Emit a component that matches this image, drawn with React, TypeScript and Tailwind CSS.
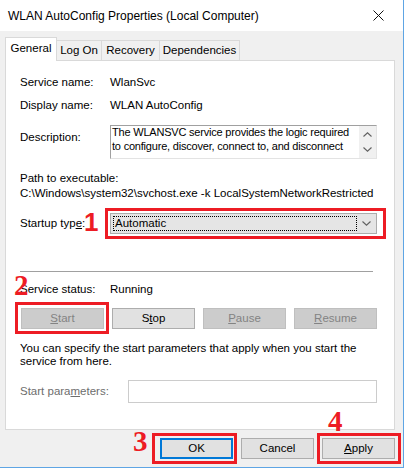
import React from 'react';

const RED = 'border-[#ed1c24]';

function Btn({
  children,
  disabled = false,
  focused = false,
  className = '',
}: {
  children: React.ReactNode;
  disabled?: boolean;
  focused?: boolean;
  className?: string;
}) {
  const look = disabled
    ? 'bg-[#cccccc] border-[#bfbfbf] text-[#838383]'
    : focused
    ? 'bg-[#e1e1e1] border-[#0078d7] border-2 text-black'
    : 'bg-[#e1e1e1] border-[#adadad] text-black';
  return (
    <div className={`h-[21px] flex items-center justify-center border ${look} ${className}`}>
      <span className="leading-none">{children}</span>
    </div>
  );
}

function RedNum({ n, className }: { n: string; className: string }) {
  return (
    <span
      className={`absolute font-['Liberation_Serif',serif] font-bold text-[29px] leading-none text-[#ed1c24] ${className}`}
    >
      {n}
    </span>
  );
}

function Chevron({ up = false }: { up?: boolean }) {
  return (
    <svg width="9" height="5" viewBox="0 0 9 5" className="block">
      <path
        d={up ? 'M0.5 4.5 L4.5 0.8 L8.5 4.5' : 'M0.5 0.5 L4.5 4.2 L8.5 0.5'}
        fill="none"
        stroke="#606060"
        strokeWidth="1.1"
      />
    </svg>
  );
}

function Field({ label, value }: { label: string; value: string }) {
  return (
    <div className="flex h-[16px] items-center">
      <span className="w-[90px]">{label}</span>
      <span>{value}</span>
    </div>
  );
}

export default function App() {
  return (
    <div className="w-[404px] h-[468px] bg-[#f0f0f0] border-r border-b border-[#5ea5e4] flex flex-col font-['Liberation_Sans',Arial,sans-serif] text-[11.5px] text-black overflow-hidden">
      {/* title bar */}
      <div className="h-[31px] shrink-0 bg-white flex items-center justify-between pl-[8px] pr-[19px]">
        <span className="text-[12px]">WLAN AutoConfig Properties (Local Computer)</span>
        <svg width="11" height="11" viewBox="0 0 11 11">
          <path d="M0.5 0.5 L10.5 10.5 M10.5 0.5 L0.5 10.5" stroke="#111" strokeWidth="1" />
        </svg>
      </div>

      <div className="flex-1 pl-[5px] pr-[8px] pt-[6px] flex flex-col">
        {/* tabs */}
        <div className="flex items-end h-[23px]">
          <div className="relative z-10 w-[52px] h-[24px] -mb-[1px] bg-white border border-b-0 border-[#d9d9d9] flex items-center justify-center pb-[2px]">
            General
          </div>
          <div className="-ml-px w-[46px] h-[20px] border border-b-0 border-[#d9d9d9] flex items-center justify-center">
            Log On
          </div>
          <div className="-ml-px w-[59px] h-[20px] border border-b-0 border-[#d9d9d9] flex items-center justify-center">
            Recovery
          </div>
          <div className="-ml-px w-[81px] h-[20px] border border-b-0 border-[#d9d9d9] flex items-center justify-center">
            Dependencies
          </div>
        </div>

        {/* panel */}
        <div className="h-[370px] bg-white border border-[#d9d9d9] pl-[14px] pt-[14px] flex flex-col">
          <Field label="Service name:" value="WlanSvc" />
          <div className="mt-[7px]">
            <Field label="Display name:" value="WLAN AutoConfig" />
          </div>

          <div className="mt-[11px] flex">
            <span className="w-[90px] pt-[4px] leading-[16px]">Description:</span>
            <div className="w-[267px] h-[34px] flex border-t border-l border-[#a0a0a0] border-r border-b border-r-[#e3e3e3] border-b-[#e3e3e3]">
              <div className="flex-1 h-[27px] pl-[1px] text-[11px] leading-[13.5px] tracking-[-0.2px] overflow-hidden">
                The WLANSVC service provides the logic required to configure, discover, connect to, and disconnect
              </div>
              <div className="w-[17px] bg-[#f0f0f0] flex flex-col items-center justify-between pt-[6px] pb-[6px]">
                <Chevron up />
                <Chevron />
              </div>
            </div>
          </div>

          <div className="mt-[12px] leading-[15px]">
            <div>Path to executable:</div>
            <div>C:\Windows\system32\svchost.exe -k LocalSystemNetworkRestricted</div>
          </div>

          <div className="mt-[12px] flex items-center relative">
            <span className="w-[90px]">
              Startup typ<span className="underline">e</span>:
            </span>
            <span className="absolute left-[64px] -top-[4px] font-['Liberation_Sans',Arial,sans-serif] font-bold text-[26px] leading-none text-[#ed1c24]">
              1
            </span>
            <div className="relative w-[267px] h-[21px] bg-[#e5e5e5] border border-[#acacac] flex items-center pl-[2px] pr-[5px]">
              <div className="flex-1 h-[15px] border border-dotted border-black flex items-center pl-[1px]">
                Automatic
              </div>
              <div className="w-[14px] flex justify-end">
                <Chevron />
              </div>
              <div className={`absolute -left-[6px] -right-[10px] -top-[6px] -bottom-[6px] border-[3px] ${RED}`} />
            </div>
          </div>

          <div className="mt-[37px] mr-[6px] w-[353px] h-px bg-[#a0a0a0]" />

          <div className="mt-[10px] relative">
            <RedNum n="2" className="-left-[6px] -top-[11px]" />
            <Field label="Service status:" value="Running" />
          </div>

          <div className="mt-[10px] pl-[1px] flex gap-[8px]">
            <div className="relative">
              <Btn disabled className="w-[83px]">
                <span className="underline">S</span>tart
              </Btn>
              <div className={`absolute -left-[6px] -right-[5px] -top-[6px] -bottom-[5px] border-[3px] ${RED}`} />
            </div>
            <Btn className="w-[83px]">
              S<span className="underline">t</span>op
            </Btn>
            <Btn disabled className="w-[83px]">
              <span className="underline">P</span>ause
            </Btn>
            <Btn disabled className="w-[83px]">
              <span className="underline">R</span>esume
            </Btn>
          </div>

          <div className="mt-[13px] leading-[13px] pr-[20px]">
            You can specify the start parameters that apply when you start the service from here.
          </div>

          <div className="mt-[12px] flex items-center">
            <span className="w-[108px] text-[#6d6d6d]">
              Start para<span className="underline">m</span>eters:
            </span>
            <div className="w-[249px] h-[23px] border border-[#cccccc] bg-white" />
          </div>
        </div>

        {/* footer buttons */}
        <div className="mt-[8px] flex justify-end gap-[8px]">
          <div className="relative">
            <RedNum n="3" className="-left-[27px] -top-[11px]" />
            <Btn focused className="w-[73px]">OK</Btn>
            <div className={`absolute -left-[8px] -right-[4px] -top-[5px] -bottom-[5px] border-[3px] ${RED}`} />
          </div>
          <Btn className="w-[73px]">Cancel</Btn>
          <div className="relative">
            <RedNum n="4" className="left-[6px] -top-[31px]" />
            <Btn className="w-[73px]">
              <span className="underline">A</span>pply
            </Btn>
            <div className={`absolute -left-[5px] -right-[6px] -top-[5px] -bottom-[5px] border-[3px] ${RED}`} />
          </div>
        </div>
      </div>
    </div>
  );
}
